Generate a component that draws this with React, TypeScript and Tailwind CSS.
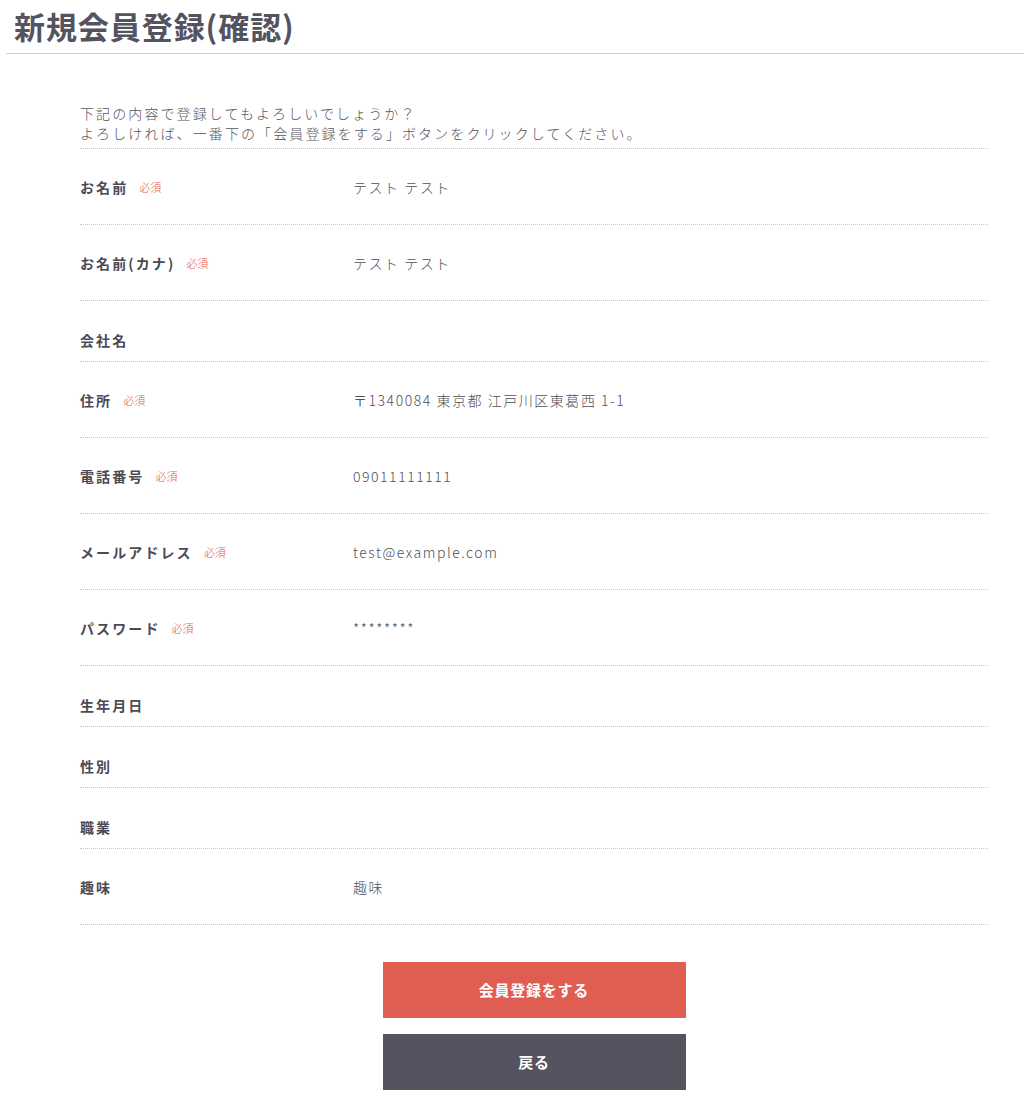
import React from 'react';

interface IRow {
  label: string;
  required?: boolean;
  value?: string;
}

const rows: IRow[] = [
  { label: 'お名前', required: true, value: 'テスト テスト' },
  { label: 'お名前(カナ)', required: true, value: 'テスト テスト' },
  { label: '会社名' },
  { label: '住所', required: true, value: '〒1340084 東京都 江戸川区東葛西 1-1' },
  { label: '電話番号', required: true, value: '09011111111' },
  { label: 'メールアドレス', required: true, value: 'test@example.com' },
  { label: 'パスワード', required: true, value: '********' },
  { label: '生年月日' },
  { label: '性別' },
  { label: '職業' },
  { label: '趣味', value: '趣味' },
];

const font = "font-['Noto_Sans_CJK_JP','Noto_Sans',sans-serif]";

/**
 * One line of the confirmation table
 */
const ConfirmRow: React.FC<{ row: IRow }> = ({ row }) => {
  const hasValue = row.value !== undefined;
  return (
    <div
      className={`flex border-b border-dotted border-[#c4c4c4] ${hasValue ? 'h-[76px] pt-[27px]' : 'h-[61px] pt-[28px]'}`}
    >
      <div className="flex h-[22px] w-[273px] shrink-0 items-center">
        <span className="text-[14px] font-bold leading-[22px] tracking-[0.15em] text-[#4b4a55]">{row.label}</span>
        {row.required && (
          <span className="ml-[11px] text-[11px] font-light leading-[22px] text-[#e0574b]">必須</span>
        )}
      </div>
      {hasValue && (
        <div className="text-[14px] font-light leading-[22px] tracking-[0.11em] text-[#4f4e59]">{row.value}</div>
      )}
    </div>
  );
};

export default function App() {
  return (
    <div className={`min-h-[1103px] bg-white ${font}`}>
      {/* --- Header --- */}
      <div className="ml-[6px] border-b border-[#cfcfcf] pb-[7px] pl-[8px] pt-[5px]">
        <h1 className="text-[31px] font-bold leading-[41px] tracking-[0.03em] text-[#54535f]">新規会員登録(確認)</h1>
      </div>

      {/* --- Content --- */}
      <div className="pl-[80px] pr-[36px] pt-[49px]">
        <div className="border-b border-dotted border-[#c4c4c4] pb-[5px] text-[14px] font-light leading-[20px] tracking-[0.15em] text-[#55545e]">
          <p>下記の内容で登録してもよろしいでしょうか？</p>
          <p>よろしければ、一番下の「会員登録をする」ボタンをクリックしてください。</p>
        </div>

        {rows.map((row) => (
          <ConfirmRow key={row.label} row={row} />
        ))}

        {/* --- Actions --- */}
        <div className="flex flex-col items-center gap-[16px] pt-[37px]">
          <button className="h-[56px] w-[303px] bg-[#e05d51] text-[15px] font-bold tracking-[0.05em] text-white">
            会員登録をする
          </button>
          <button className="h-[56px] w-[303px] bg-[#54535f] text-[15px] font-bold tracking-[0.05em] text-white">
            戻る
          </button>
        </div>
      </div>
    </div>
  );
}
